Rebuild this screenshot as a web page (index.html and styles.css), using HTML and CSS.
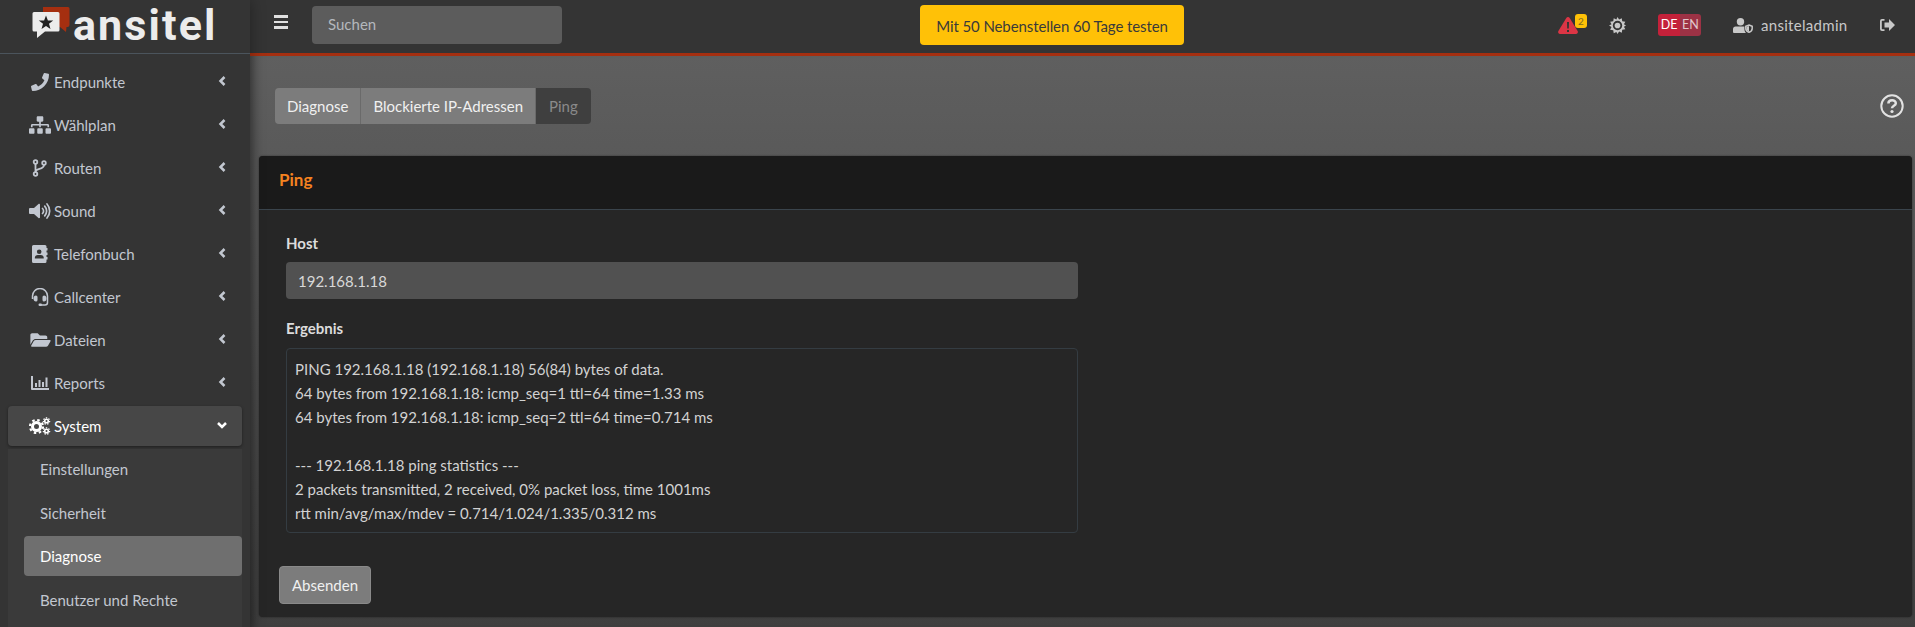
FILE: index.html
```html
<!DOCTYPE html>
<html lang="de">
<head>
<meta charset="utf-8">
<title>Ping</title>
<link rel="stylesheet" href="styles.css">
</head>
<body>
<div class="app">
  <aside class="sidebar">
    <div class="brand">
      <svg class="brand-mark" viewBox="0 0 40 34">
        <path fill="#a52f10" d="M11 1h25a1.500 1.500 0 0 1 1.500 1.500V19a2 2 0 0 1-2 2h-1l-.5 5-6-5H11z"/>
        <path fill="#ececec" d="M2 6h24a1.500 1.500 0 0 1 1.500 1.500V24a1.500 1.500 0 0 1-1.500 1.500H13L5 32v-6.500H2A1.500 1.500 0 0 1 .5 24V7.500A1.500 1.500 0 0 1 2 6z"/>
        <path fill="#222" d="M14 9.500l1.900 5h5.300l-4.200 3.300 1.500 5.200-4.500-3-4.500 3 1.500-5.200-4.200-3.300h5.300z"/>
      </svg>
      <span class="brand-name">ansitel</span>
    </div>
    <nav class="nav">
      <a class="nav-item"><span class="nav-icon"><svg class="i16" viewBox="0 0 512 512"><path fill="currentColor" d="M493.400 24.600l-104-24c-11.300-2.600-22.900 3.300-27.500 13.900l-48 112c-4.200 9.800-1.400 21.300 6.900 28l60.600 49.600c-36 76.700-98.900 140.500-177.200 177.200l-49.600-60.600c-6.800-8.300-18.200-11.100-28-6.900l-112 48C3.900 366.500-2 378.100.6 389.400l24 104C27.100 504.200 36.700 512 48 512c256.100 0 464-207.500 464-464 0-11.200-7.700-20.900-18.600-23.400z"/></svg></span><span class="nav-label">Endpunkte</span><svg class="chev" viewBox="0 0 10 12"><path d="M7.500 2L3.500 6l4 4"/></svg></a>
      <a class="nav-item"><span class="nav-icon"><svg class="i22" viewBox="0 0 640 512"><path fill="currentColor" d="M128 352H32c-17.670 0-32 14.330-32 32v96c0 17.670 14.330 32 32 32h96c17.670 0 32-14.330 32-32v-96c0-17.670-14.330-32-32-32zm-24-80h192v48h48v-48h192v48h48v-57.590c0-21.170-17.230-38.410-38.410-38.410H344v-64h40c17.670 0 32-14.330 32-32V32c0-17.670-14.330-32-32-32H256c-17.670 0-32 14.330-32 32v96c0 17.670 14.330 32 32 32h40v64H94.410C73.230 224 56 241.230 56 262.410V320h48v-48zm264 80h-96c-17.670 0-32 14.330-32 32v96c0 17.670 14.330 32 32 32h96c17.670 0 32-14.330 32-32v-96c0-17.670-14.330-32-32-32zm240 0h-96c-17.670 0-32 14.330-32 32v96c0 17.670 14.330 32 32 32h96c17.670 0 32-14.330 32-32v-96c0-17.670-14.330-32-32-32z"/></svg></span><span class="nav-label">Wählplan</span><svg class="chev" viewBox="0 0 10 12"><path d="M7.500 2L3.500 6l4 4"/></svg></a>
      <a class="nav-item"><span class="nav-icon"><svg class="i16" viewBox="0 0 16 18"><g fill="none" stroke="currentColor" stroke-width="1.800"><circle cx="3.500" cy="3" r="1.800"/><circle cx="3.500" cy="15" r="1.800"/><circle cx="12" cy="4" r="1.800"/><path d="M3.500 5v8M12 6c0 5-8.500 3-8.500 7"/></g></svg></span><span class="nav-label">Routen</span><svg class="chev" viewBox="0 0 10 12"><path d="M7.500 2L3.500 6l4 4"/></svg></a>
      <a class="nav-item"><span class="nav-icon"><svg class="i22" viewBox="0 0 22 16"><path fill="currentColor" d="M9.500 1L5 5H1a1 1 0 0 0-1 1v4a1 1 0 0 0 1 1h4l4.500 4c.6.500 1.500.1 1.500-.7V1.700c0-.8-.9-1.200-1.500-.7z"/><path fill="none" stroke="currentColor" stroke-width="1.700" stroke-linecap="round" d="M13.500 5.500a3.500 3.500 0 0 1 0 5M15.700 3.200a7 7 0 0 1 0 9.600M18 1a10.500 10.500 0 0 1 0 14"/></svg></span><span class="nav-label">Sound</span><svg class="chev" viewBox="0 0 10 12"><path d="M7.500 2L3.500 6l4 4"/></svg></a>
      <a class="nav-item"><span class="nav-icon"><svg class="i16b" viewBox="0 0 16 18"><path fill="currentColor" fill-rule="evenodd" d="M1.500 0H13a1.500 1.500 0 0 1 1.500 1.500V3h1v2.500h-1v2h1V10h-1v2h1v2.500h-1v2A1.500 1.500 0 0 1 13 18H1.500A1.500 1.500 0 0 1 0 16.500v-15A1.500 1.500 0 0 1 1.500 0zM7.200 4.500a2.300 2.300 0 1 0 0 4.600 2.300 2.300 0 0 0 0-4.600zM3.200 13.500h8c.4 0 .6-.3.600-.6 0-1.700-1.300-3-3-3h-3c-1.700 0-3 1.300-3 3 0 .3.200.6.400.6z"/></svg></span><span class="nav-label">Telefonbuch</span><svg class="chev" viewBox="0 0 10 12"><path d="M7.500 2L3.500 6l4 4"/></svg></a>
      <a class="nav-item"><span class="nav-icon"><svg class="i18" viewBox="0 0 18 18"><path fill="none" stroke="currentColor" stroke-width="1.500" d="M1.500 11V8a7.500 7.500 0 0 1 15 0v6.500a2.500 2.500 0 0 1-2.500 2.500H9"/><path fill="currentColor" d="M5 7.500a1.500 1.500 0 0 1 1.500 1.500v3A1.500 1.500 0 0 1 5 13.500c-1.500 0-2.500-1.300-2.500-3s1-3 2.500-3zM13 7.500c1.500 0 2.500 1.300 2.500 3s-1 3-2.500 3a1.500 1.500 0 0 1-1.500-1.500V9A1.500 1.500 0 0 1 13 7.500z"/><rect fill="currentColor" x="7.500" y="15.500" width="3.500" height="2.500" rx="1.200"/></svg></span><span class="nav-label">Callcenter</span><svg class="chev" viewBox="0 0 10 12"><path d="M7.500 2L3.500 6l4 4"/></svg></a>
      <a class="nav-item"><span class="nav-icon"><svg class="i21" viewBox="0 0 576 512"><path fill="currentColor" d="M572.694 292.093L500.270 416.248A63.997 63.997 0 0 1 444.989 448H45.025c-18.523 0-30.064-20.093-20.731-36.093l72.424-124.155A64 64 0 0 1 152 256h399.964c18.523 0 30.064 20.093 20.730 36.093zM152 224h328v-48c0-26.510-21.490-48-48-48H272l-64-64H48C21.490 64 0 85.490 0 112v278.046l69.077-118.418C86.214 242.250 117.989 224 152 224z"/></svg></span><span class="nav-label">Dateien</span><svg class="chev" viewBox="0 0 10 12"><path d="M7.500 2L3.500 6l4 4"/></svg></a>
      <a class="nav-item"><span class="nav-icon"><svg class="i18" viewBox="0 0 18 14"><path fill="currentColor" d="M0 0h2v12h16v2H1a1 1 0 0 1-1-1zM4 7h2v4H4zM7.500 4h2v7h-2zM11 6h2v5h-2zM14.500 1.500h2V11h-2z"/></svg></span><span class="nav-label">Reports</span><svg class="chev" viewBox="0 0 10 12"><path d="M7.500 2L3.500 6l4 4"/></svg></a>
      <a class="nav-item is-open"><span class="nav-icon"><svg class="i22" viewBox="0 0 22 17"><circle cx="7.500" cy="9" r="4" fill="none" stroke="currentColor" stroke-width="3"/><circle cx="7.500" cy="9" r="6.500" fill="none" stroke="currentColor" stroke-width="2.200" stroke-dasharray="2.500 2.600"/><circle cx="17.500" cy="3.500" r="1.800" fill="none" stroke="currentColor" stroke-width="1.600"/><circle cx="17.500" cy="3.500" r="3.200" fill="none" stroke="currentColor" stroke-width="1.200" stroke-dasharray="1.400 1.400"/><circle cx="17.500" cy="13.500" r="1.800" fill="none" stroke="currentColor" stroke-width="1.600"/><circle cx="17.500" cy="13.500" r="3.200" fill="none" stroke="currentColor" stroke-width="1.200" stroke-dasharray="1.400 1.400"/></svg></span><span class="nav-label">System</span><svg class="chev" viewBox="0 0 12 10"><path d="M2 3l4 4 4-4"/></svg></a>
      <div class="subnav">
        <a class="sub-item">Einstellungen</a>
        <a class="sub-item">Sicherheit</a>
        <a class="sub-item is-current">Diagnose</a>
        <a class="sub-item">Benutzer und Rechte</a>
      </div>
    </nav>
  </aside>
  <div class="main">
    <header class="topbar">
      <div class="burger"><span></span><span></span><span></span></div>
      <div class="search">Suchen</div>
      <a class="promo">Mit 50 Nebenstellen 60 Tage testen</a>
      <div class="top-right">
        <div class="alert">
          <svg class="alert-icon" viewBox="0 0 20 17"><path fill="#dc3545" d="M8.300 1a2 2 0 0 1 3.400 0l7.900 13a2 2 0 0 1-1.700 3H2.100a2 2 0 0 1-1.700-3z"/><path fill="#343434" d="M9 5h2l-.2 6.500H9.200zM9 13h2v2H9z"/></svg>
          <span class="badge">2</span>
        </div>
        <svg class="sun" viewBox="0 0 18 18"><circle cx="9" cy="9" r="3" fill="currentColor"/><path fill="currentColor" fill-rule="evenodd" d="M9 0l1.700 2.700L13.500 1.200l.5 3.300 3.300.5-1.500 2.800L18 9l-2.200 1.200 1.500 2.800-3.300.5-.5 3.300-2.800-1.500L9 18l-1.200-2.200-2.800 1.500-.5-3.300-3.300-.5 1.500-2.800L0 9l2.700-1.200L1.200 5l3.300-.5.500-3.300 2.800 1.500zM9 4a5 5 0 1 0 0 10A5 5 0 0 0 9 4z"/></svg>
        <div class="lang"><span class="lang-on">DE</span><span class="lang-off">EN</span></div>
        <div class="user">
          <svg class="user-icon" viewBox="0 0 20 15"><circle cx="7.500" cy="3.700" r="3.700" fill="currentColor"/><path fill="currentColor" d="M2.500 8.500h8c.3 0 .6 0 .9.100V11c0 1.600.6 3 1.600 4H1a1 1 0 0 1-1-1v-3c0-1.400 1.100-2.500 2.500-2.500z"/><path fill="none" stroke="currentColor" stroke-width="1.500" d="M16 7l3.200 1.300V10.500c0 2-1.400 3.300-3.200 3.800-1.800-.5-3.200-1.800-3.200-3.800V8.300z"/><path fill="currentColor" d="M16 8v5.500c-1.500-.4-2.500-1.500-2.500-3V8.800z"/></svg>
          <span class="user-name">ansiteladmin</span>
        </div>
        <svg class="logout" viewBox="0 0 16 14"><path fill="currentColor" d="M16 7l-6 6V9.500H5.500v-5H10V1zM5.500 1H3a2 2 0 0 0-2 2v8a2 2 0 0 0 2 2h2.500v-1.800H3.200a.4.400 0 0 1-.4-.4V3.200c0-.2.200-.4.400-.4h2.300z"/></svg>
      </div>
    </header>
    <main class="content">
      <div class="crumb-row">
        <div class="crumbs">
          <a class="crumb">Diagnose</a>
          <a class="crumb">Blockierte IP-Adressen</a>
          <span class="crumb is-active">Ping</span>
        </div>
        <svg class="help" viewBox="0 0 24 24"><circle cx="12" cy="12" r="10.700" fill="none" stroke="currentColor" stroke-width="2"/><path fill="none" stroke="currentColor" stroke-width="2.500" d="M8.400 9.500c0-4.400 7.400-4.400 7.400-.2 0 2.600-3.800 2.400-3.800 5"/><circle cx="12" cy="17.500" r="1.600" fill="currentColor"/></svg>
      </div>
      <section class="card">
        <div class="card-head">Ping</div>
        <div class="card-body">
          <label class="field-label">Host</label>
          <div class="host">192.168.1.18</div>
          <label class="field-label result-label">Ergebnis</label>
          <pre class="result">PING 192.168.1.18 (192.168.1.18) 56(84) bytes of data.
64 bytes from 192.168.1.18: icmp_seq=1 ttl=64 time=1.33 ms
64 bytes from 192.168.1.18: icmp_seq=2 ttl=64 time=0.714 ms

--- 192.168.1.18 ping statistics ---
2 packets transmitted, 2 received, 0% packet loss, time 1001ms
rtt min/avg/max/mdev = 0.714/1.024/1.335/0.312 ms</pre>
        </div>
        <div class="card-foot"><button class="submit">Absenden</button></div>
      </section>
    </main>
  </div>
</div>
</body>
</html>
```
FILE: styles.css
```css
* { box-sizing: border-box; }
html, body { margin: 0; height: 627px; overflow: hidden; }
body { font-family: "Lato", "Noto Sans", sans-serif; font-size: 15px; color: #d6d6d6; background: #444; }
.app { display: flex; height: 627px; }

.sidebar { width: 250px; flex: none; background: #343434; color: #c2c7d0; overflow: hidden; z-index: 2; box-shadow: 0 0 14px rgba(0,0,0,.35); }
.brand { height: 54px; border-bottom: 1px solid #4b545c; display: flex; align-items: flex-start; padding: 6px 0 0 32px; }
.brand-mark { width: 40px; height: 34px; flex: none; }
.brand-name { font-family: "Roboto", sans-serif; font-weight: 700; font-size: 43px; line-height: 50px; height: 50px; color: #ececec; margin: -6px 0 0 1px; letter-spacing: 2.100px; }

.nav { padding: 8px 8px 0; }
.nav-item { display: flex; align-items: center; height: 40px; margin-bottom: 3px; padding: 0 15px 0 0; border-radius: 4px; }
.nav-icon { width: 46px; padding-left: 18px; flex: none; display: flex; justify-content: center; }
.nav-label { flex: 1; }
.i16 { width: 18px; height: 18px; display: block; }
.i16b { width: 16px; height: 18px; display: block; }
.i18 { width: 18px; height: 18px; display: block; }
.i21 { width: 21px; height: 18px; display: block; }
.i22 { width: 22px; height: 18px; display: block; }
.chev { width: 10px; height: 12px; fill: none; stroke: currentColor; stroke-width: 2.500px; flex: none; margin-top: -3px; }
.is-open { background: #474747; color: #fff; box-shadow: 0 1px 3px rgba(0,0,0,.4); }
.is-open .chev { width: 12px; height: 10px; margin-right: -1px; }
.subnav { background: #3a3a3a; margin-top: 3px; padding: 0 0 0 16px; height: 200px; }
.sub-item { display: flex; align-items: center; height: 40px; margin-bottom: 3.500px; padding-left: 16px; border-radius: 4px; }
.is-current { background: #6f6f6f; color: #fff; }

.main { flex: 1; min-width: 0; display: flex; flex-direction: column; }
.topbar { height: 56px; flex: none; background: #343434; border-bottom: 3px solid #a52f10; display: flex; align-items: flex-start; }
.burger { width: 14px; margin: 15px 0 0 24px; display: flex; flex-direction: column; gap: 3px; }
.burger span { height: 2.500px; background: #e0e0e0; }
.search { width: 250px; height: 38px; margin: 6px 0 0 24px; padding: 0 16px 2px; background: #5c5c5c; border-radius: 4px; display: flex; align-items: center; color: #b4b8bd; }
.promo { width: 264px; height: 40px; margin: 5px 0 0 358px; padding-top: 2px; background: #ffc107; color: #3a3a3a; border-radius: 4px; display: flex; align-items: center; justify-content: center; letter-spacing: -.1px; }
.top-right { flex: 1; display: flex; align-items: flex-start; color: #c8c8c8; }
.alert { position: relative; margin: 17px 0 0 374px; width: 20px; height: 17px; }
.alert-icon { width: 20px; height: 17px; display: block; }
.badge { position: absolute; left: 17px; top: -3px; width: 12px; height: 14px; background: #ffc107; color: #7d6a20; border-radius: 3px; font-size: 10px; line-height: 14px; text-align: center; }
.sun { width: 17px; height: 17px; margin: 17px 0 0 31px; }
.lang { display: flex; margin: 14px 0 0 32px; height: 22px; border-radius: 3px; overflow: hidden; font-size: 12.500px; line-height: 22px; }
.lang-on { width: 22px; background: #c4213a; color: #fff; text-align: center; }
.lang-off { width: 21px; background: #9c3245; color: #e0c8cc; text-align: center; }
.user { display: flex; align-items: center; margin: 13px 0 0 32px; height: 24px; }
.user-icon { width: 20px; height: 15px; }
.user-name { margin-left: 8px; letter-spacing: .3px; }
.logout { width: 16px; height: 14px; margin: 18px 0 0 32px; }

.content { flex: 1; min-height: 0; padding: 32px 3px 0 9px; background: linear-gradient(#5f5f5f, #3f3f3f); box-shadow: inset 10px 0 10px -8px rgba(0,0,0,.3); }
.crumb-row { display: flex; justify-content: space-between; align-items: center; height: 36px; padding: 0 8px 0 16px; }
.crumbs { display: flex; border-radius: 4px; overflow: hidden; }
.crumb { height: 36px; display: flex; align-items: center; padding: 0 12px; background: #7c7c7c; color: #f0f0f0; border-right: 1px solid #6a6a6a; }
.crumb.is-active { background: #3f3f3f; color: #8a8a8a; border: 0; padding: 0 13px; }
.help { width: 24px; height: 24px; color: #e2e2e2; }
.card { margin-top: 32px; height: 461px; background: #262626; border-radius: 4px; box-shadow: 0 0 2px rgba(0,0,0,.5); overflow: hidden; }
.card-head { height: 54px; padding: 0 20px 6px; background: #1a1a1a; color: #f58220; font-weight: 700; font-size: 17px; display: flex; align-items: center; border-bottom: 1px solid #3a444c; }
.card-body { padding: 19px 27px 0; height: 356px; }
.field-label { display: block; font-weight: 700; color: #dcdcdc; line-height: 24px; height: 31px; margin-top: 2px; }
.result-label { margin-top: 17px; height: 32px; }
.host { width: 792px; height: 37px; background: #515151; border-radius: 4px; padding: 0 12px; display: flex; align-items: center; color: #d8d8d8; }
.result { width: 792px; height: 185px; margin: 0; padding: 8px 8px; border: 1px solid #343c42; border-radius: 4px; font: inherit; line-height: 24px; color: #d2d2d2; background: #262626; }
.card-foot { padding: 0 20px; }
.submit { width: 92px; height: 38px; background: #7c7c7c; color: #f0f0f0; border: 1px solid #8a8a8a; border-radius: 4px; font: inherit; padding: 0; }
```
